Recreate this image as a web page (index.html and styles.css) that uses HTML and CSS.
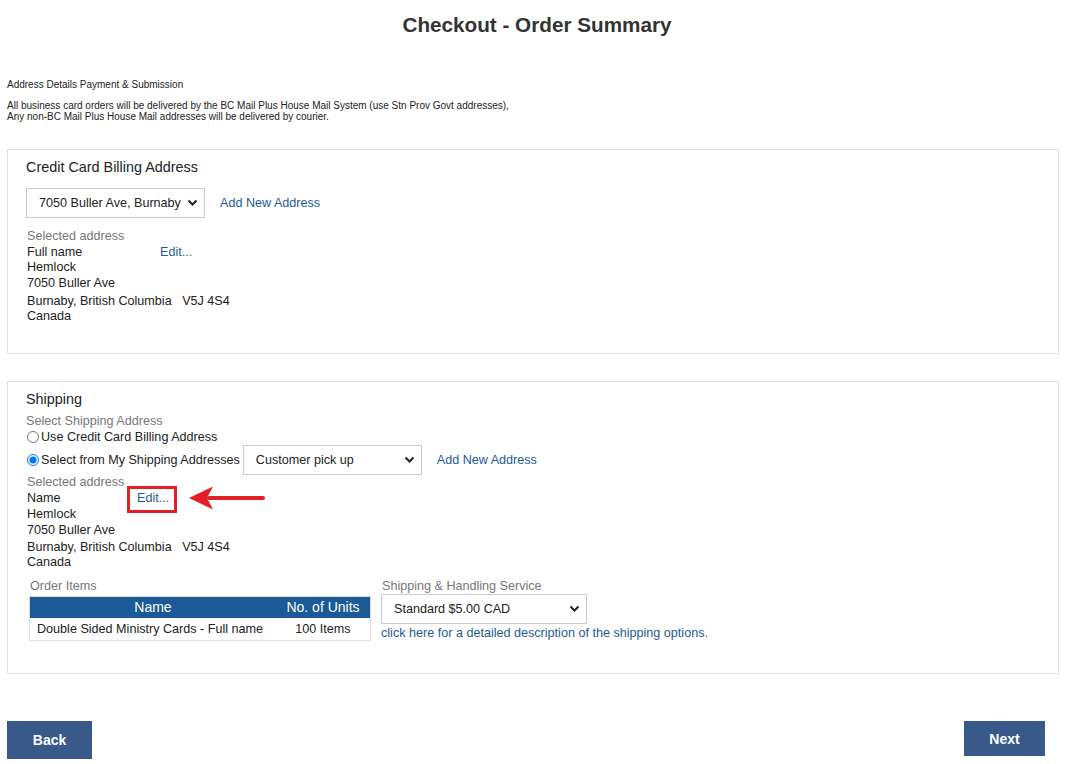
FILE: index.html
```html
<!DOCTYPE html>
<html lang="en">
<head>
<meta charset="utf-8">
<title>Checkout - Order Summary</title>
<link rel="stylesheet" href="styles.css">
</head>
<body>
<div class="page">
  <h1 class="title">Checkout - Order Summary</h1>
  <div class="steps">Address Details Payment &amp; Submission</div>
  <div class="notice">All business card orders will be delivered by the BC Mail Plus House Mail System (use Stn Prov Govt addresses),<br>Any non-BC Mail Plus House Mail addresses will be delivered by courier.</div>

  <section class="panel billing">
    <h2 class="panel-title">Credit Card Billing Address</h2>
    <div class="select-row">
      <div class="select sel-billing"><span class="sel-text">7050 Buller Ave, Burnaby</span><svg class="chev" width="11" height="8" viewBox="0 0 11 8"><path d="M1.5 1.5 L5.5 5.5 L9.5 1.5" fill="none" stroke="#222" stroke-width="2"/></svg></div>
      <a class="link add-link">Add New Address</a>
    </div>
    <div class="address">
      <div class="muted">Selected address</div>
      <div class="name-row"><span class="name-col wide">Full name</span><a class="link">Edit...</a></div>
      <div class="tight">Hemlock</div>
      <div>7050 Buller Ave</div>
      <div class="tall">Burnaby, British Columbia&nbsp;&nbsp;&nbsp;V5J 4S4</div>
      <div>Canada</div>
    </div>
  </section>

  <section class="panel shipping">
    <h2 class="panel-title">Shipping</h2>
    <div class="muted ship-sub">Select Shipping Address</div>
    <label class="radio-line first"><input type="radio" name="ship"> Use Credit Card Billing Address</label>
    <div class="select-row ship-row">
      <label class="radio-line"><input type="radio" name="ship" checked> Select from My Shipping Addresses</label>
      <div class="select sel-ship"><span class="sel-text">Customer pick up</span><svg class="chev" width="11" height="8" viewBox="0 0 11 8"><path d="M1.5 1.5 L5.5 5.5 L9.5 1.5" fill="none" stroke="#222" stroke-width="2"/></svg></div>
      <a class="link add-link">Add New Address</a>
    </div>
    <div class="address ship-address">
      <div class="muted">Selected address</div>
      <div class="name-row"><span class="name-col">Name</span><a class="link edit-mark">Edit...<span class="mark-box"></span><svg class="mark-arrow" width="76" height="26" viewBox="0 0 76 26"><path d="M20 13 H74" stroke="#e31e24" stroke-width="4" stroke-linecap="round"/><path d="M0 13 L24 1.5 L18 13 L24 24.5 Z" fill="#e31e24"/></svg></a></div>
      <div>Hemlock</div>
      <div>7050 Buller Ave</div>
      <div class="tall">Burnaby, British Columbia&nbsp;&nbsp;&nbsp;V5J 4S4</div>
      <div>Canada</div>
    </div>
    <div class="order">
      <div class="order-items">
        <div class="muted">Order Items</div>
        <table class="items">
          <thead><tr><th class="c-name">Name</th><th class="c-units">No. of Units</th></tr></thead>
          <tbody><tr><td class="c-name">Double Sided Ministry Cards - Full name</td><td class="c-units">100 Items</td></tr></tbody>
        </table>
      </div>
      <div class="service">
        <div class="muted">Shipping &amp; Handling Service</div>
        <div class="select sel-service"><span class="sel-text">Standard $5.00 CAD</span><svg class="chev" width="11" height="8" viewBox="0 0 11 8"><path d="M1.5 1.5 L5.5 5.5 L9.5 1.5" fill="none" stroke="#222" stroke-width="2"/></svg></div>
        <a class="link">click here for a detailed description of the shipping options.</a>
      </div>
    </div>
  </section>

  <div class="actions">
    <button class="btn btn-back">Back</button>
    <button class="btn btn-next">Next</button>
  </div>
</div>
</body>
</html>
```
FILE: styles.css
```css
html, body {
  margin: 0;
  padding: 0;
  background: #fff;
}
body {
  font-family: "Liberation Sans", Arial, sans-serif;
  color: #222;
}
.page {
  padding: 13px 8px 0 7px;
}
.title {
  margin: 0;
  padding-left: 8px;
  text-align: center;
  font-size: 20.7px;
  line-height: 24px;
  font-weight: bold;
  color: #333;
}
.steps {
  margin-top: 42px;
  font-size: 10px;
  line-height: 12px;
  color: #222;
}
.notice {
  margin-top: 9px;
  font-size: 10px;
  line-height: 11px;
  color: #222;
}
.panel {
  border: 1px solid #ddd;
  padding: 8px 18px 0 18px;
  font-size: 12.6px;
  line-height: 16px;
  box-sizing: border-box;
}
.billing {
  margin-top: 27px;
  height: 205px;
}
.shipping {
  margin-top: 27px;
  height: 293px;
}
.panel-title {
  margin: 0;
  font-size: 14.4px;
  line-height: 18px;
  font-weight: normal;
  color: #222;
}
.link {
  color: #1f5a96;
  text-decoration: none;
  cursor: pointer;
}
.muted {
  color: #777;
}
.select-row {
  display: flex;
  align-items: center;
}
.add-link {
  margin-left: 15px;
}
.billing .select-row {
  margin-top: 12px;
}
.select {
  box-sizing: border-box;
  height: 30px;
  border: 1px solid #ccc;
  background: #fff;
  display: flex;
  align-items: center;
  padding: 0 6px 0 12px;
  gap: 6px;
  font-size: 12.6px;
  color: #222;
}
.sel-text {
  flex: 1;
  white-space: nowrap;
  overflow: hidden;
}
.chev {
  flex: none;
}
.sel-billing {
  width: 179px;
}
.sel-ship {
  width: 179px;
  margin-left: 3px;
}
.sel-service {
  width: 206px;
}
.address {
  margin-top: 10px;
  padding-left: 1px;
}
.name-row {
  display: flex;
}
.name-col {
  width: 110px;
}
.name-col.wide {
  width: 133px;
}
.tight {
  margin-top: -1px;
}
.tall {
  margin-top: 2px;
  margin-bottom: -1px;
}
.ship-sub {
  margin-top: 5px;
}
.radio-line {
  display: flex;
  align-items: center;
  font-size: 12.6px;
  line-height: 16px;
  color: #222;
}
.radio-line input {
  margin: 0 2px 0 1px;
  width: 12px;
  height: 12px;
}
.ship-row {
  height: 30px;
}
.ship-address {
  margin-top: -1px;
}
.ship-address .tall {
  margin-top: 1px;
  margin-bottom: -1px;
}
.edit-mark {
  position: relative;
}
.mark-box {
  position: absolute;
  left: -10px;
  top: -4px;
  width: 50px;
  height: 27px;
  box-sizing: border-box;
  border: 3px solid #e31e24;
}
.mark-arrow {
  position: absolute;
  left: 52px;
  top: -5px;
}
.order {
  display: flex;
  gap: 10px;
  margin-top: 8px;
  padding-left: 3px;
}
.order-items {
  width: 342px;
}
.order-items .muted {
  padding-left: 1px;
}
.items {
  border-collapse: collapse;
  width: 342px;
  border: 1px solid #ddd;
  margin-top: 2px;
}
.items th {
  background: #1b5a96;
  color: #fff;
  font-weight: normal;
  font-size: 14px;
  height: 21px;
  padding: 0 7px;
  line-height: 21px;
  white-space: nowrap;
}
.items td {
  height: 22px;
  padding: 0 7px;
  font-size: 12.6px;
  color: #222;
  white-space: nowrap;
}
.items .c-units {
  text-align: center;
  width: 80px;
}
.items th.c-name {
  text-align: center;
}
.service {
  display: flex;
  flex-direction: column;
  align-items: flex-start;
}
.service .muted {
  padding-left: 1px;
}
.service .link {
  margin-top: 1px;
}
.actions {
  display: flex;
  justify-content: space-between;
  align-items: flex-start;
  margin-top: 47px;
  padding-right: 14px;
}
.btn {
  border: none;
  background: #38598a;
  color: #fff;
  font-family: "Liberation Sans", Arial, sans-serif;
  font-weight: bold;
  font-size: 14px;
  padding: 0;
  cursor: pointer;
}
.btn-back {
  width: 85px;
  height: 38px;
}
.btn-next {
  width: 81px;
  height: 35px;
}
```
